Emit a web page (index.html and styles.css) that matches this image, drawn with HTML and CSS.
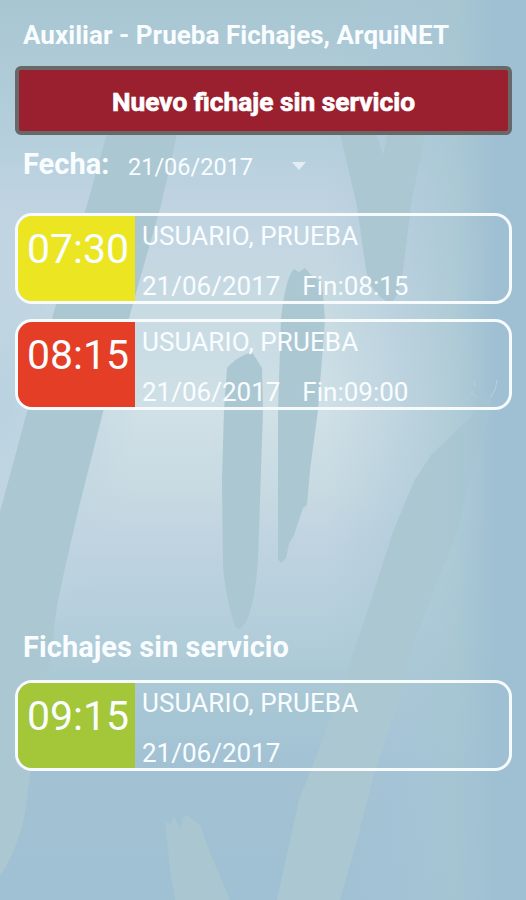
FILE: index.html
```html
<!DOCTYPE html>
<html lang="es">
<head>
<meta charset="utf-8">
<title>Fichajes</title>
<link rel="stylesheet" href="styles.css">
</head>
<body>
<svg class="backdrop" viewBox="0 0 526 900" preserveAspectRatio="none" aria-hidden="true">
  <defs>
    <linearGradient id="sky" x1="0" y1="0" x2="0" y2="1">
      <stop offset="0" stop-color="#a8c6d1"/>
      <stop offset=".07" stop-color="#adcad6"/>
      <stop offset=".16" stop-color="#b5d0dc"/>
      <stop offset=".22" stop-color="#bfd2e1"/>
      <stop offset=".33" stop-color="#c7dae2"/>
      <stop offset=".46" stop-color="#cfe0e6"/>
      <stop offset=".54" stop-color="#c8dbe2"/>
      <stop offset=".6" stop-color="#c0d3e1"/>
      <stop offset=".69" stop-color="#b4cfdb"/>
      <stop offset=".75" stop-color="#abc9d5"/>
      <stop offset=".85" stop-color="#a2c2d4"/>
      <stop offset="1" stop-color="#a0c0d3"/>
    </linearGradient>
    <radialGradient id="left">
      <stop offset="0" stop-color="#b9d1e0"/>
      <stop offset=".4" stop-color="#bdd3e1" stop-opacity=".7"/>
      <stop offset="1" stop-color="#bfd4e1" stop-opacity="0"/>
    </radialGradient>
    <linearGradient id="right" x1="0" y1="0" x2="1" y2="0">
      <stop offset=".62" stop-color="#a8c5d8" stop-opacity="0"/>
      <stop offset=".75" stop-color="#a8c5d8" stop-opacity=".4"/>
      <stop offset=".86" stop-color="#a6c6d2" stop-opacity=".75"/>
      <stop offset=".94" stop-color="#9fc0d3"/>
      <stop offset="1" stop-color="#9fc0d3"/>
    </linearGradient>
    <linearGradient id="edge" x1="0" y1="0" x2="526" y2="0" gradientUnits="userSpaceOnUse">
      <stop offset=".84" stop-color="#abc7d2"/>
      <stop offset=".94" stop-color="#a3c3d3"/>
    </linearGradient>
  </defs>
  <rect width="526" height="900" fill="url(#sky)"/>
  <ellipse cx="0" cy="400" rx="140" ry="250" fill="url(#left)"/>
  <rect width="526" height="900" fill="url(#right)"/>
  <g fill="#abc7d2">
    <path d="M108 130L178 130L161 205L134 300L103 412L80 503L69 550L57 605L50 660L34 745L28 790Q24 840 0 876V512L27 412L54 311L87 205Z"/>
    <path d="M340 133L376 133L383 155L388 133H425L411 205L403 272Q396 307 388 302Q371 293 366 270L357 206Z"/>
    <path d="M294 269L299 272L305 268L311 275L322 282L325 320L318 410L310 470L307 505L303 508L294 535L289 544L286 558L281 563L278 559V410L281 318Q286 276 294 269Z"/>
    <path d="M252 352L262 368L263 410L258 560Q255 603 246 622L240 629L236 628Q226 603 223 565L222 480L224 410L227 368Q236 357 252 352Z"/>
  </g>
  <path fill="url(#edge)" d="M474 386L478 390L486 397L492 395L487 423L473 471L456 535L437 583L415 640L399 700L373 778L357 840L340 900H277L299 800L317 755L345 678L371 600L393 532L414 481L431 455L454 433L478 410L476 400Z"/>
  <path fill="#a9c6d1" d="M165 820L171 825L173 816L177 822L180 829L183 818L186 815L200 825L209 850L230 900H175L170 870Z"/>
  <path d="M474 382l1 4m-4 6q3 4 6 5m20-17q0 9-6 17" fill="none" stroke="#b8d1da" stroke-width="1"/>
</svg>
<main class="screen">
  <h1 class="title">Auxiliar - Prueba Fichajes, ArquiNET</h1>
  <button class="new-entry" type="button">Nuevo fichaje sin servicio</button>
  <div class="filter">
    <span class="filter-label">Fecha:</span>
    <span class="filter-date">21/06/2017</span>
    <svg class="caret" viewBox="0 0 14 8" aria-hidden="true"><path d="M0 0H14L7 8Z" fill="#e3eef2"/></svg>
  </div>
  <section class="list list-services">
    <article class="entry">
      <div class="time yellow">07:30</div>
      <div class="details">
        <div class="name">USUARIO, PRUEBA</div>
        <div class="dates"><span>21/06/2017</span><span>Fin:08:15</span></div>
      </div>
    </article>
    <article class="entry">
      <div class="time red">08:15</div>
      <div class="details">
        <div class="name">USUARIO, PRUEBA</div>
        <div class="dates"><span>21/06/2017</span><span>Fin:09:00</span></div>
      </div>
    </article>
  </section>
  <h2 class="subtitle">Fichajes sin servicio</h2>
  <section class="list">
    <article class="entry">
      <div class="time green">09:15</div>
      <div class="details">
        <div class="name">USUARIO, PRUEBA</div>
        <div class="dates"><span>21/06/2017</span></div>
      </div>
    </article>
  </section>
</main>
</body>
</html>
```
FILE: styles.css
```css
* { box-sizing: border-box; }

body {
  margin: 0;
  background: #a0c0d3;
  color: #f9fdff;
  font-family: Roboto, "Liberation Sans", sans-serif;
}

.backdrop {
  position: absolute;
  inset: 0;
  width: 526px;
  height: 900px;
  z-index: -1;
}

.screen {
  width: 526px;
  height: 900px;
  padding: 20px 14px 0 15px;
  overflow: hidden;
}

.title, .subtitle {
  margin: 0;
  padding-left: 8px;
  font-weight: 700;
  line-height: 30px;
  white-space: nowrap;
}

.title { font-size: 26px; letter-spacing: .04px; }
.subtitle { margin-bottom: 18px; font-size: 29px; letter-spacing: .06px; }

.new-entry {
  display: block;
  width: 100%;
  height: 69px;
  margin-top: 16px;
  padding: 3px 0 0;
  border: 4px solid #686868;
  border-radius: 6px;
  background: #9a1f2f;
  color: #fff;
  font: 700 26.3px/1 Roboto, sans-serif;
  -webkit-text-stroke: .7px #fff;
}

.filter {
  display: flex;
  align-items: center;
  height: 58px;
  padding-left: 8px;
}

.filter-label { width: 105px; font-size: 29px; font-weight: 700; }
.filter-date { width: 164px; padding-top: 5px; font-size: 23.5px; }
.caret { width: 14px; height: 8px; margin-top: 4px; }

.list { display: grid; gap: 15px; }
.list-services { height: 439px; align-content: start; padding-top: 20px; }

.entry {
  display: flex;
  height: 91px;
  border: 3px solid #f7fbfd;
  border-radius: 17px;
  overflow: hidden;
}

.time {
  width: 117px;
  padding: 9px 0 0 9px;
  font-size: 41px;
  line-height: 48px;
}

.yellow { background: #ece622; }
.red { background: #e43f26; }
.green { background: #a4c639; }

.details {
  padding: 5px 0 0 7px;
  font-size: 26px;
  line-height: 31px;
  white-space: nowrap;
}

.name { letter-spacing: .13px; }
.dates { display: flex; gap: 22px; margin-top: 19px; }
```
